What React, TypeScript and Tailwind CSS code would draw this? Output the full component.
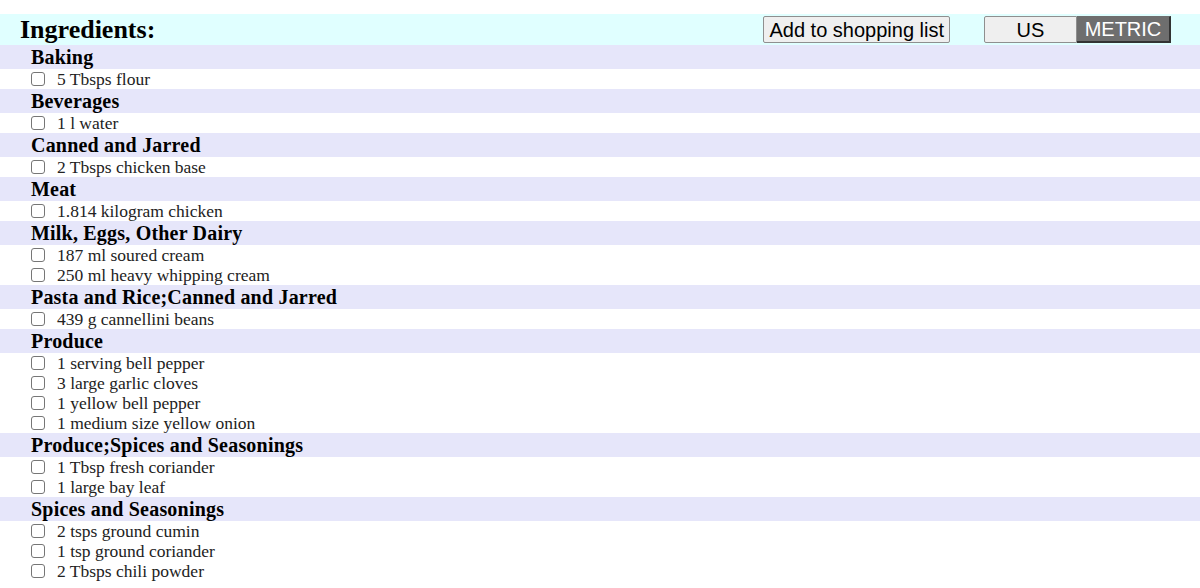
import { useState } from 'react';

type Group = { name: string; items: string[] };

const groups: Group[] = [
    { name: 'Baking', items: ['5 Tbsps flour'] },
    { name: 'Beverages', items: ['1 l water'] },
    { name: 'Canned and Jarred', items: ['2 Tbsps chicken base'] },
    { name: 'Meat', items: ['1.814 kilogram chicken'] },
    { name: 'Milk, Eggs, Other Dairy', items: ['187 ml soured cream', '250 ml heavy whipping cream'] },
    { name: 'Pasta and Rice;Canned and Jarred', items: ['439 g cannellini beans'] },
    {
        name: 'Produce',
        items: ['1 serving bell pepper', '3 large garlic cloves', '1 yellow bell pepper', '1 medium size yellow onion'],
    },
    { name: 'Produce;Spices and Seasonings', items: ['1 Tbsp fresh coriander', '1 large bay leaf'] },
    { name: 'Spices and Seasonings', items: ['2 tsps ground cumin', '1 tsp ground coriander', '2 Tbsps chili powder'] },
];

export default function App() {
    const [metric, setMetric] = useState(true);

    return (
        <div className="pt-[14px] bg-white text-black" style={{ fontFamily: '"Liberation Serif", serif' }}>
            <div className="h-[31px] bg-[#e0ffff] flex items-center pl-[20px] pr-[29px]">
                <h2 className="text-[26px] font-bold leading-none flex-1 pt-[1px]">Ingredients:</h2>
                <button
                    className="h-[27px] px-[5px] bg-[#efefef] border border-[#8f8f8f] rounded-[2px] text-[20px] leading-none text-black"
                    style={{ fontFamily: '"Liberation Sans", Arial, sans-serif' }}
                >
                    Add to shopping list
                </button>
                <div
                    className="ml-[34px] flex h-[27px] text-[20px] leading-none"
                    style={{ fontFamily: '"Liberation Sans", Arial, sans-serif' }}
                >
                    <button
                        onClick={() => setMetric(false)}
                        className={
                            metric
                                ? 'w-[93px] bg-[#efefef] border border-[#8f8f8f] rounded-l-[2px] text-black'
                                : 'w-[93px] bg-[#6e6e6e] border-t border-l border-[#6e6e6e] border-r-2 border-b-2 border-r-[#333] border-b-[#333] text-white'
                        }
                    >
                        US
                    </button>
                    <button
                        onClick={() => setMetric(true)}
                        className={
                            metric
                                ? 'w-[94px] bg-[#6e6e6e] border-t border-[#6e6e6e] border-r-2 border-b-2 border-r-[#333] border-b-[#333] text-white'
                                : 'w-[94px] bg-[#efefef] border border-[#8f8f8f] rounded-r-[2px] text-black'
                        }
                    >
                        METRIC
                    </button>
                </div>
            </div>
            {groups.map((g) => (
                <div key={g.name}>
                    <div className="h-[24px] bg-[#e6e6fa] pl-[31px] text-[20px] font-bold leading-[24px] tracking-[0.2px]">
                        {g.name}
                    </div>
                    {g.items.map((item) => (
                        <label key={item} className="h-[20px] flex items-center pl-[31px] text-[17.5px] leading-[20px] text-[#222]">
                            <input
                                type="checkbox"
                                className="appearance-none w-[14px] h-[14px] m-0 mr-[12px] shrink-0 bg-white border border-[#767676] rounded-[3px] checked:bg-[#0075ff] checked:border-[#0075ff]"
                            />
                            <span>{item}</span>
                        </label>
                    ))}
                </div>
            ))}
        </div>
    );
}
